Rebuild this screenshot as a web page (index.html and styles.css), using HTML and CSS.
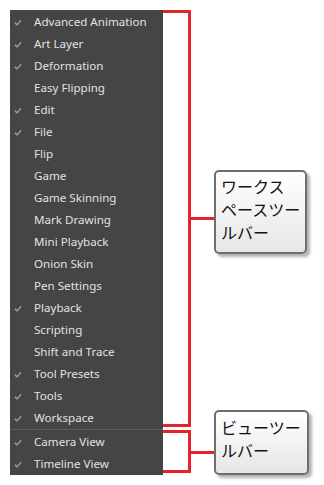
FILE: index.html
```html
<!DOCTYPE html>
<html>
<head>
<meta charset="utf-8">
<link rel="stylesheet" href="styles.css">
</head>
<body>
<div class="stage">
  <div class="menu">
    <div class="group">
      <div class="item on"><span class="chk"><svg viewBox="0 0 8 7" width="8" height="7"><path d="M0.8 3.6 L3 5.8 L7.2 1.2" /></svg></span>Advanced Animation</div>
      <div class="item on"><span class="chk"><svg viewBox="0 0 8 7" width="8" height="7"><path d="M0.8 3.6 L3 5.8 L7.2 1.2" /></svg></span>Art Layer</div>
      <div class="item on"><span class="chk"><svg viewBox="0 0 8 7" width="8" height="7"><path d="M0.8 3.6 L3 5.8 L7.2 1.2" /></svg></span>Deformation</div>
      <div class="item"><span class="chk"></span>Easy Flipping</div>
      <div class="item on"><span class="chk"><svg viewBox="0 0 8 7" width="8" height="7"><path d="M0.8 3.6 L3 5.8 L7.2 1.2" /></svg></span>Edit</div>
      <div class="item on"><span class="chk"><svg viewBox="0 0 8 7" width="8" height="7"><path d="M0.8 3.6 L3 5.8 L7.2 1.2" /></svg></span>File</div>
      <div class="item"><span class="chk"></span>Flip</div>
      <div class="item"><span class="chk"></span>Game</div>
      <div class="item"><span class="chk"></span>Game Skinning</div>
      <div class="item"><span class="chk"></span>Mark Drawing</div>
      <div class="item"><span class="chk"></span>Mini Playback</div>
      <div class="item"><span class="chk"></span>Onion Skin</div>
      <div class="item"><span class="chk"></span>Pen Settings</div>
      <div class="item on"><span class="chk"><svg viewBox="0 0 8 7" width="8" height="7"><path d="M0.8 3.6 L3 5.8 L7.2 1.2" /></svg></span>Playback</div>
      <div class="item"><span class="chk"></span>Scripting</div>
      <div class="item"><span class="chk"></span>Shift and Trace</div>
      <div class="item on"><span class="chk"><svg viewBox="0 0 8 7" width="8" height="7"><path d="M0.8 3.6 L3 5.8 L7.2 1.2" /></svg></span>Tool Presets</div>
      <div class="item on"><span class="chk"><svg viewBox="0 0 8 7" width="8" height="7"><path d="M0.8 3.6 L3 5.8 L7.2 1.2" /></svg></span>Tools</div>
      <div class="item on"><span class="chk"><svg viewBox="0 0 8 7" width="8" height="7"><path d="M0.8 3.6 L3 5.8 L7.2 1.2" /></svg></span>Workspace</div>
    </div>
    <div class="sep"></div>
    <div class="group">
      <div class="item on"><span class="chk"><svg viewBox="0 0 8 7" width="8" height="7"><path d="M0.8 3.6 L3 5.8 L7.2 1.2" /></svg></span>Camera View</div>
      <div class="item on"><span class="chk"><svg viewBox="0 0 8 7" width="8" height="7"><path d="M0.8 3.6 L3 5.8 L7.2 1.2" /></svg></span>Timeline View</div>
    </div>
  </div>

  <div class="bracket b1"></div>
  <div class="link l1"></div>
  <div class="callout c1">ワークス<br>ペースツー<br>ルバー</div>

  <div class="bracket b2"></div>
  <div class="link l2"></div>
  <div class="callout c2">ビューツー<br>ルバー</div>
</div>
</body>
</html>
```
FILE: styles.css
```css
html, body {
  margin: 0;
  padding: 0;
  background: #ffffff;
}
.stage {
  position: relative;
  width: 324px;
  height: 485px;
  padding: 10px;
  box-sizing: border-box;
}
.menu {
  width: 153px;
  background: #454545;
  font-family: "Noto Sans", "Open Sans", sans-serif;
  font-size: 11.6px;
  color: #e2e2e2;
  padding-bottom: 1px;
}
.item {
  height: 22px;
  display: flex;
  align-items: center;
  white-space: nowrap;
}
.chk {
  width: 24px;
  flex: none;
  display: flex;
  justify-content: flex-start;
  padding-left: 4px;
  box-sizing: border-box;
  padding-top: 3px;
}
.chk svg path {
  fill: none;
  stroke: #969696;
  stroke-width: 1.5;
}
.sep {
  height: 1px;
  background: #5e5e5e;
  margin: 1px 0 0 0;
}
.bracket {
  position: absolute;
  left: 163px;
  width: 25px;
  border: 3px solid #e3242b;
  border-left: none;
}
.b1 {
  top: 10px;
  height: 411px;
}
.b2 {
  top: 430px;
  height: 37px;
}
.link {
  position: absolute;
  left: 191px;
  width: 23px;
  height: 3px;
  background: #e3242b;
}
.l1 { top: 217px; }
.l2 { top: 451px; }
.callout {
  position: absolute;
  left: 214px;
  border: 2px solid #6e6e6e;
  border-radius: 5px;
  background: linear-gradient(#ffffff, #e6e6e6);
  box-shadow: 3px 3px 3px rgba(0, 0, 0, 0.3);
  font-family: "Noto Sans CJK JP", sans-serif;
  font-size: 16px;
  line-height: 23px;
  color: #111;
  padding: 3px 4px 0 5px;
  box-sizing: border-box;
}
.c1 {
  top: 170px;
  width: 93px;
  height: 84px;
}
.c2 {
  top: 410px;
  width: 95px;
  height: 65px;
  padding-top: 4px;
}
```
